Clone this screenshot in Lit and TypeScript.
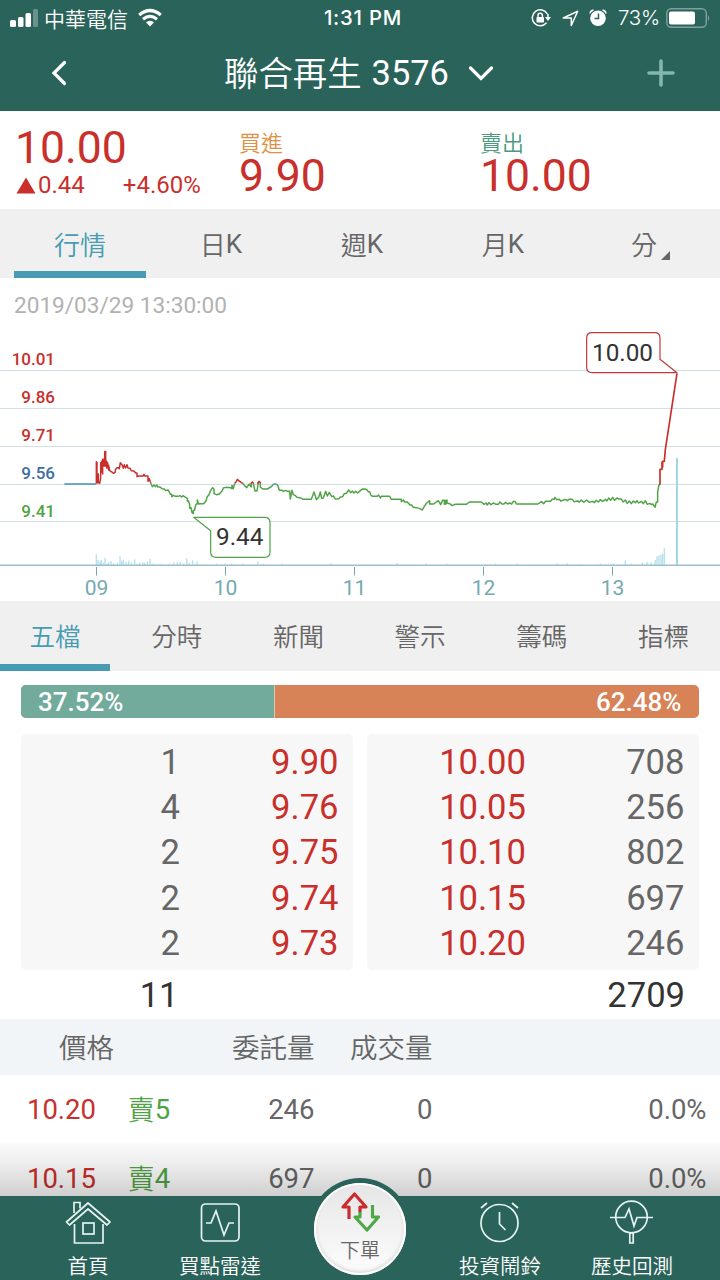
import { LitElement, html, svg, css } from "lit";
import { customElement } from "lit/decorators.js";

const TABS = ["行情", "日K", "週K", "月K", "分"];
const SECTIONS = ["五檔", "分時", "新聞", "警示", "籌碼", "指標"];
const BIDS = [["1", "9.90"], ["4", "9.76"], ["2", "9.75"], ["2", "9.74"], ["2", "9.73"]];
const ASKS = [["10.00", "708"], ["10.05", "256"], ["10.10", "802"], ["10.15", "697"], ["10.20", "246"]];
const ORDERS = [["10.20", "賣5", "246", "0", "0.0%"], ["10.15", "賣4", "697", "0", "0.0%"]];
const LEVELS: [string, number, string][] = [
  ["10.01", 87.3, "red"], ["9.86", 125.3, "red"], ["9.71", 163.3, "red"], ["9.56", 201, "blue"], ["9.41", 238.5, "green"],
];
const HOURS: [string, number][] = [["09", 96.5], ["10", 225.5], ["11", 354.5], ["12", 483.5], ["13", 612.5]];

// Price and volume traces use a grid three times finer than the screen.
const OPENING = "M289 490V425L291 490V425M291 490L295 462V488L299 490L302 474V428L305 456V424L308 462V418L311 438V418L314 438V395L317 394V438L320 424V444L323 428V436L326 450V436L329 452L334 455L341 460L346 456V449L351 443H355L358 446L361 428L366 434L370 445L373 434L377 444L381 434L384 444L390 445L394 452L402 453L407 459H411V470L416 468H429L432 463L435 468H444V484L448 476L452 488";
const MID = "M452 488L457 500L462 495L466 500L470 495L474 501H480L486 506L493 507L497 512L504 510L508 516L511 523H515V530L520 526L526 529H534L540 527L545 531L549 527L557 532L562 535V543L565 542L569 554V565L573 563L576 578L580 581V572L584 570L587 555L592 550V540L595 552L600 551H611L618 543L621 531L627 524L631 513L638 503L642 508V521L649 524L658 522L666 513L670 504L677 502L692 503L696 506V496L700 506L704 490";
const MID2 = "M728 489L733 496L740 503L748 492L754 501V491M760 490L765 513H771L775 488M781 488V501L788 507H802L814 500L820 493M830 493L834 498L838 511H846L850 514L857 511L864 515L869 513L871 537L876 511L880 524L885 526L891 532L903 534L909 538H934L942 516L947 531L949 539L956 532L961 516L965 535L970 534L977 514L982 528L988 517L995 530L1000 528L1006 537L1017 536L1021 531L1028 530L1032 522L1040 519L1046 510L1052 518L1057 513L1062 519L1067 514L1073 519L1082 511L1087 507L1099 508L1105 515L1109 515L1113 526L1118 529H1131L1136 525L1141 534L1144 529H1169L1174 538H1204V545L1210 540L1214 546H1222L1230 555L1235 555L1240 562L1250 563L1260 566L1267 570L1273 559L1280 549L1289 542V552H1301L1315 542L1322 554L1328 541H1333V553L1337 541V553L1341 540V549L1349 551L1357 557L1365 553H1399L1408 546H1444L1452 553L1458 549L1462 555L1467 548L1473 554L1480 549L1488 553H1495L1500 546L1506 552H1512L1517 547L1523 552L1529 549L1535 552L1540 544L1546 545L1549 552H1614L1624 545L1631 551L1637 544H1652L1656 538H1662L1665 532L1670 539L1678 538L1682 543L1691 540L1696 538L1702 542L1707 538L1717 538L1722 545L1733 543L1738 546L1744 540L1751 547L1760 540L1768 547L1778 544L1783 548L1788 541L1795 546L1801 539L1808 544L1817 538L1821 543L1826 534L1832 541L1838 532L1844 541L1851 534L1856 537H1864L1869 546L1876 540L1882 550L1888 543L1894 551L1900 543L1906 548L1911 542L1916 549L1924 544L1930 551L1936 542L1942 553L1949 550L1955 554L1959 552L1965 562L1969 546H1973V516L1977 494H1980";
const CLOSE = "M1980 494V448H1986V426L1988 441V424H1993L1996 389L2031 160";
const TINY_RED = "M704 490L708 486L712 478L717 483L722 486L728 490M752 491L757 486L761 491M772 491L777 484L782 490";
const VOLUMES: [number, number][] = [
  [289, 32], [294, 15], [300, 11], [304, 15], [310, 6], [315, 22], [321, 4], [326, 9], [333, 12], [340, 5], [352, 7], [360, 26],
  [365, 13], [370, 16], [378, 10], [386, 13], [394, 8], [404, 17], [411, 4], [419, 7], [428, 8], [434, 7], [442, 10], [450, 19],
  [459, 4], [480, 4], [507, 4], [521, 8], [532, 9], [541, 10], [551, 5], [560, 20], [568, 6], [578, 14], [591, 11], [610, 3],
  [650, 4], [675, 4], [695, 4], [730, 4], [773, 10], [790, 4], [845, 4], [993, 5], [1192, 6], [1278, 4], [1340, 4], [1486, 4], [1550, 4],
  [1670, 5], [1701, 5], [1740, 3], [1801, 4], [1840, 4], [1876, 14], [1895, 4], [1927, 7], [1941, 9], [1954, 8],
  [1966, 15], [1971, 26], [1977, 29], [1983, 31], [1988, 34], [1993, 50],
];

@customElement("app-root")
export class AppRoot extends LitElement {
  static styles = css`
    :host { display: block; width: 720px; height: 1280px; overflow: hidden; position: relative; background: #fff;
      font-family: Roboto, "Noto Sans CJK TC", sans-serif; font-weight: 400; color: #666; }
    * { box-sizing: border-box; }
    svg { display: block; flex: none; overflow: visible; }
    .cjk { font-family: "Noto Sans CJK TC", sans-serif; font-weight: 350; }
    .red { color: #c92f2b; fill: #c92f2b; }
    .green { color: #50a346; fill: #50a346; }
    .blue { color: #3b6da5; fill: #3b6da5; }
    .head { height: 111px; background: #2a635a; color: #fff; }
    .status { height: 35px; display: grid; grid-template-columns: 270px 186px 264px; align-items: center; }
    .carrier { display: flex; align-items: center; padding-left: 10px; font-size: 21px; line-height: 34px; }
    .carrier .cjk { margin: 0 10px 0 5px; }
    .time { text-align: center; font: 500 20.3px/36px Inter, sans-serif; letter-spacing: .8px; }
    .tray { display: flex; align-items: center; padding-left: 75px; }
    .pct { font: 300 20.5px/36px Inter, sans-serif; margin: 0 5px 0 11px; width: 43px; white-space: nowrap; letter-spacing: -.3px; }
    .nav { height: 75px; display: grid; grid-template-columns: 224px 272px 224px; align-items: center; }
    .title { display: flex; align-items: center; white-space: nowrap; font-size: 34.4px; line-height: 74px; }
    .title .cjk { margin-right: 10px; line-height: 72px; height: 75px; }
    .title svg { margin-left: 19px; }
    .quote { height: 98px; display: grid; grid-template-columns: 239px 241px 240px; }
    .last { padding: 15px 0 0 15px; }
    .big { font-size: 44.5px; line-height: 45px; }
    .delta { display: flex; align-items: center; font-size: 24px; line-height: 26px; margin-top: 1px; }
    .delta svg { margin: 0 2px 0 1px; }
    .delta .rate { margin-left: 38px; }
    .side { padding-top: 17px; }
    .side .cjk { font-size: 22px; line-height: 26px; }
    .tabs { height: 69px; background: #f0f0f0; display: grid; grid-template-columns: repeat(5, 141px); padding-left: 9.5px; font-size: 26px; }
    .tab { display: flex; justify-content: center; align-items: center; position: relative; height: 69px; line-height: 69px; }
    .label { display: flex; align-items: center; line-height: 68px; }
    .tab.on { color: #479bb3; }
    .tab.on::after { content: ""; position: absolute; bottom: 0; width: 132px; height: 7px; background: #479bb3; }
    .tab svg { position: absolute; left: 87px; top: 42px; }
    .chart { height: 323px; }
    .chart text { font-family: Roboto, sans-serif; }
    .stamp-line { height: 0; position: relative; }
    .stamp { position: absolute; left: 14px; top: 14px; font-size: 22.6px; line-height: 28px; color: #b2b2b2; white-space: nowrap; }
    .sections { height: 70px; background: #f0f0f0; display: grid; grid-template-columns: repeat(6, 121.7px); margin-left: -5.8px; font-size: 25.5px; width: 731px; }
    .sections .tab { height: 70px; line-height: 68px; align-items: flex-start; }
    .sections .tab.on::after { width: 110px; }
    .ratio { margin: 14px 21px 0; height: 33px; border-radius: 5px; overflow: hidden; display: flex; justify-content: space-between; color: #fff;
      font-weight: 500; font-size: 26px; line-height: 34px; background: #d78257; }
    .buy { background: #72ab9b; border-right: 1px solid #d9c9a9; padding-left: 17px; }
    .sell { padding-right: 17.5px; }
    .book { display: grid; grid-template-columns: 332px 332px; gap: 14px; margin: 16px 21px 0; font-size: 34.6px; }
    .card { background: #f7f7f7; border-radius: 5px; height: 236px; padding: 6px 0 4px; }
    .lvl { display: grid; line-height: 45.2px; height: 45.2px; text-align: right; }
    .lvl { grid-template-columns: 159px 158.5px; }
    .sum { display: grid; grid-template-columns: 178.5px 506.5px; height: 49px; line-height: 51px; text-align: right; color: #333; font-size: 34.6px; }
    .cols { display: grid; grid-template-columns: 96px 75px 143.5px 118px 274px; align-items: center; }
    .thead { height: 56px; background: #f1f5f7; grid-template-columns: 114px 200.5px 118px; font-size: 27.5px; line-height: 54px; text-align: right; align-items: start; }
    .row { height: 69px; font-size: 27.5px; line-height: 69px; text-align: right; }
    .who { display: flex; justify-content: flex-end; padding-right: .8px; }
    .who .cjk { line-height: 67px; font-size: 27px; }
    .shade { position: absolute; left: 0; right: 0; top: 1143px; height: 53px; background: linear-gradient(rgba(0,0,0,.02), rgba(0,0,0,.07) 40%, rgba(0,0,0,.19)); }
    .dock { position: absolute; left: 0; right: 0; top: 1196px; height: 84px; background: #2a635a; color: #fff;
      display: grid; grid-template-columns: 132px 132px 148px 132px 132px; padding: 0 22px; }
    .item { display: flex; flex-direction: column; align-items: center; font-size: 20.5px; line-height: 28px; padding-top: 4px; white-space: nowrap; }
    .item .cjk { margin-top: 2.5px; }
    .item svg { fill: none; stroke: #e4f3f0; stroke-width: 1.7; }
    .order { position: absolute; left: 309px; top: 1178px; width: 102px; height: 102px; border-radius: 51px; background: #2a635a; display: flex; padding: 5px; }
    .disc { flex: none; width: 92px; height: 92px; border-radius: 46px; background: linear-gradient(#e6e6e6, #fafafa 85%); box-shadow: inset 0 0 0 2px #fff, inset 0 -2px 5px #bbb;
      display: flex; flex-direction: column; align-items: center; padding-top: 8px; color: #666; font-size: 20px; line-height: 24px; }
    .disc .cjk { margin-top: 7px; }
    .back { margin-left: 50.5px; }
    .add { margin-left: 150px; }
    .gap { margin-left: 10.5px; }
    .buy-label { color: #de9145; }
    .sell-label { color: #4c9a80; }
  `;

  private chart() {
    return html`<svg class="chart" width="720" height="323" viewBox="0 0 720 323">
      ${[92.5, 130.5, 168.5, 206.5, 243.5].map((y) => svg`<path d="M0 ${y}H720" stroke="#d3dfe5" />`)}
      ${LEVELS.map(([t, y, c]) => svg`<text x="55" y=${y} text-anchor="end" font-size="17" font-weight="500" class=${c}>${t}</text>`)}
      <g transform="translate(0 42) scale(.33333)" fill="none" stroke-width="4.4" stroke-linejoin="round">
        ${VOLUMES.map(([x, h]) => svg`<path d="M${x} 735v${-h}" stroke="#b9e3ec" />`)}
        <path d="M2031 735V414" stroke="#a4d7e4" stroke-width="6" />
        <path d="M0 736H2160" stroke="#9dbfcc" />
        <path d="M193 492H289M820 492H830" stroke="#4691b3" stroke-width="5" />
        <path d=${OPENING} stroke="#c92f2b" />
        <path d=${MID} stroke="#50a346" />
        <path d=${MID2} stroke="#50a346" />
        <path d=${TINY_RED} stroke="#c92f2b" />
        <path d=${CLOSE} stroke="#c92f2b" stroke-width="5" />
        <path d="M581 592H794Q810 592 810 608V696Q810 712 794 712H648Q632 712 632 696V632Z" fill="#fff" stroke="#50a346" stroke-width="3.6" />
        <path d="M2031 158H1776Q1760 158 1760 142V54Q1760 38 1776 38H1964Q1980 38 1980 54V118Z" fill="#fff" stroke="#c3393a" stroke-width="3.6" />
      </g>
      <text x="216" y="267" font-size="24.3" fill="#333">9.44</text>
      <text x="592" y="83" font-size="24.3" fill="#333">10.00</text>
      ${HOURS.map(([t, x]) => svg`<path d="M${x} 289V297.500" stroke="#75a9af" /><text x=${x} y="317" text-anchor="middle" font-size="21" fill="#75a9af">${t}</text>`)}
    </svg>`;
  }

  render() {
    return html`
      <div class="head">
        <div class="status">
          <div class="carrier">
            <svg width="29" height="18" viewBox="0 0 29 18" fill="#fff"><rect x="0" y="11" width="6" height="7" rx="1.5" /><rect x="8" y="8" width="5.500" height="10" rx="1.500" /><rect x="15.500" y="4" width="5.500" height="14" rx="1.500" /><rect x="23" y="0" width="5" height="18" rx="1.500" opacity=".3" /></svg>
            <span class="cjk">中華電信</span>
            <svg width="24" height="18" viewBox="0 0 24 18" fill="none" stroke="#fff" stroke-width="3.200"><path d="M1.200 6Q12-3 22.800 6M5 10.200Q12 4.600 19 10.200" /><path d="M8 13.300Q12 10.300 16 13.300L12 17.500Z" fill="#fff" stroke="none" /></svg>
          </div>
          <div class="time">1:31 PM</div>
          <div class="tray">
            <svg width="20" height="18" viewBox="0 0 20 18" fill="none" stroke="#fff" stroke-width="1.500"><path d="M16.300 5A8 8 0 1 0 15.500 13.800M17 5V9" /><path d="M14 8H20L17 12Z" fill="#fff" stroke="none" /><rect x="5.500" y="8" width="7.500" height="5.500" rx=".8" fill="#fff" stroke="none" /><path d="M7 8V6.500a2.200 2.200 0 0 1 4.400 0V8" /></svg>
            <svg class="gap" width="17" height="17" viewBox="0 0 17 17" fill="none" stroke="#fff" stroke-width="1.500" stroke-linejoin="round"><path d="M15.700 1.200L9.300 15.500V8H1.300Z" /></svg>
            <svg class="gap" width="18" height="18" viewBox="0 0 18 18"><circle cx="9" cy="9.300" r="7.800" fill="#fff" /><path d="M9.500 4.500V9.500H5.500" fill="none" stroke="#2a635a" stroke-width="1.500" /><path d="M1 4.500Q1.500 1.500 4.500 1M17 4.500Q16.500 1.500 13.500 1" fill="none" stroke="#fff" stroke-width="1.500" /></svg>
            <span class="pct">73%</span>
            <svg width="45" height="20" viewBox="0 0 45 20"><rect x=".8" y=".8" width="39.500" height="18.400" rx="4.500" fill="none" stroke="#7fa19c" stroke-width="1.400" /><rect x="3" y="3.500" width="26" height="13" rx="2" fill="#fff" /><path d="M42 7Q44.500 10 42 13Z" fill="#7fa19c" /></svg>
          </div>
        </div>
        <div class="nav">
          <svg class="back" width="17" height="26" viewBox="0 0 17 26" fill="none" stroke="#fff" stroke-width="3.200" stroke-linecap="round"><path d="M13.500 2.500L3 13L13.500 23.500" /></svg>
          <div class="title"><span class="cjk">聯合再生</span><span>3576</span>
            <svg width="26" height="16" viewBox="0 0 26 16" fill="none" stroke="#fff" stroke-width="3.200" stroke-linecap="round"><path d="M2.500 3L13 13.500L23.500 3" /></svg></div>
          <svg class="add" width="30" height="30" viewBox="0 0 30 30" fill="none" stroke="#83b5b1" stroke-width="3.600" stroke-linecap="round"><path d="M15 3V27M3 15H27" /></svg>
        </div>
      </div>
      <div class="quote">
        <div class="last red"><div class="big">10.00</div>
          <div class="delta"><svg width="20" height="17"><path d="M10 .5L19.500 16.500H.5Z" /></svg><span>0.44</span><span class="rate">+4.60%</span></div></div>
        <div class="side"><div class="cjk buy-label">買進</div><div class="big red">9.90</div></div>
        <div class="side"><div class="cjk sell-label">賣出</div><div class="big red">10.00</div></div>
      </div>
      <div class="tabs">${TABS.map((t, i) => html`<div class="tab ${i ? "" : "on"}"><span class="label">${[...t].map((c) => c === "K" ? html`<span>K</span>` : html`<span class="cjk">${c}</span>`)}</span>${i === 4 ? html`<svg width="9" height="9"><path d="M9 0V9H0Z" fill="#666" /></svg>` : ""}</div>`)}</div>
      <div class="stamp-line"><div class="stamp">2019/03/29 13:30:00</div></div>
      ${this.chart()}
      <div class="sections">${SECTIONS.map((t, i) => html`<div class="tab cjk ${i ? "" : "on"}">${t}</div>`)}</div>
      <div class="ratio"><div class="buy" style="width:37.520%">37.52%</div><div class="sell">62.48%</div></div>
      <div class="book">
        <div class="card bid">${BIDS.map(([n, p]) => html`<div class="lvl"><span>${n}</span><span class="red">${p}</span></div>`)}</div>
        <div class="card ask">${ASKS.map(([p, n]) => html`<div class="lvl"><span class="red">${p}</span><span>${n}</span></div>`)}</div>
      </div>
      <div class="sum"><span>11</span><span>2709</span></div>
      <div class="cols thead cjk"><span>價格</span><span>委託量</span><span>成交量</span></div>
      ${ORDERS.map(([p, s, q, f, r]) => html`<div class="cols row"><span class="red">${p}</span><span class="green who"><span class="cjk">${s[0]}</span><span>${s[1]}</span></span><span>${q}</span><span>${f}</span><span>${r}</span></div>`)}
      <div class="shade"></div>
      <div class="dock">
        <div class="item"><svg width="46" height="48" viewBox="0 0 46 48"><path d="M9 13V2.500H15V8.500M9.500 24V43H38V24" /><path d="M23 3L1.500 22L4.500 25L23 9L42 25L45 22Z" stroke-linejoin="round" /><rect x="18" y="23" width="11" height="11" /></svg><span class="cjk">首頁</span></div>
        <div class="item"><svg width="46" height="48" viewBox="0 0 46 48"><rect x="4.500" y="4" width="37.500" height="37" rx="4" /><path d="M9 23H14L19 11L27 35L32 23H37" /></svg><span class="cjk">買點雷達</span></div>
        <div></div>
        <div class="item"><svg width="46" height="48" viewBox="0 0 46 48"><circle cx="22.500" cy="23" r="18.500" /><path d="M22.500 12V24L28.500 30M4 8L10 3M35 3L41 8" /></svg><span class="cjk">投資鬧鈴</span></div>
        <div class="item"><svg width="46" height="48" viewBox="0 0 46 48"><circle cx="22.500" cy="17" r="15.800" /><path d="M1 17.500H16L20 9L25 26L28 17.500H44M20.800 33H24.200V43H20.800Z" /></svg><span class="cjk">歷史回測</span></div>
      </div>
      <div class="order"><div class="disc">
        <svg width="40" height="40" viewBox="0 0 40 40" fill="none" stroke-width="3.200" stroke-linejoin="round"><path d="M9 28V16H3L14.500 3L26 16H20V21" stroke="#cc2b2d" /><path d="M20 21V26H15L27 39L38.500 26H32.500V14" stroke="#4da847" /></svg>
        <span class="cjk">下單</span></div></div>
    `;
  }
}
